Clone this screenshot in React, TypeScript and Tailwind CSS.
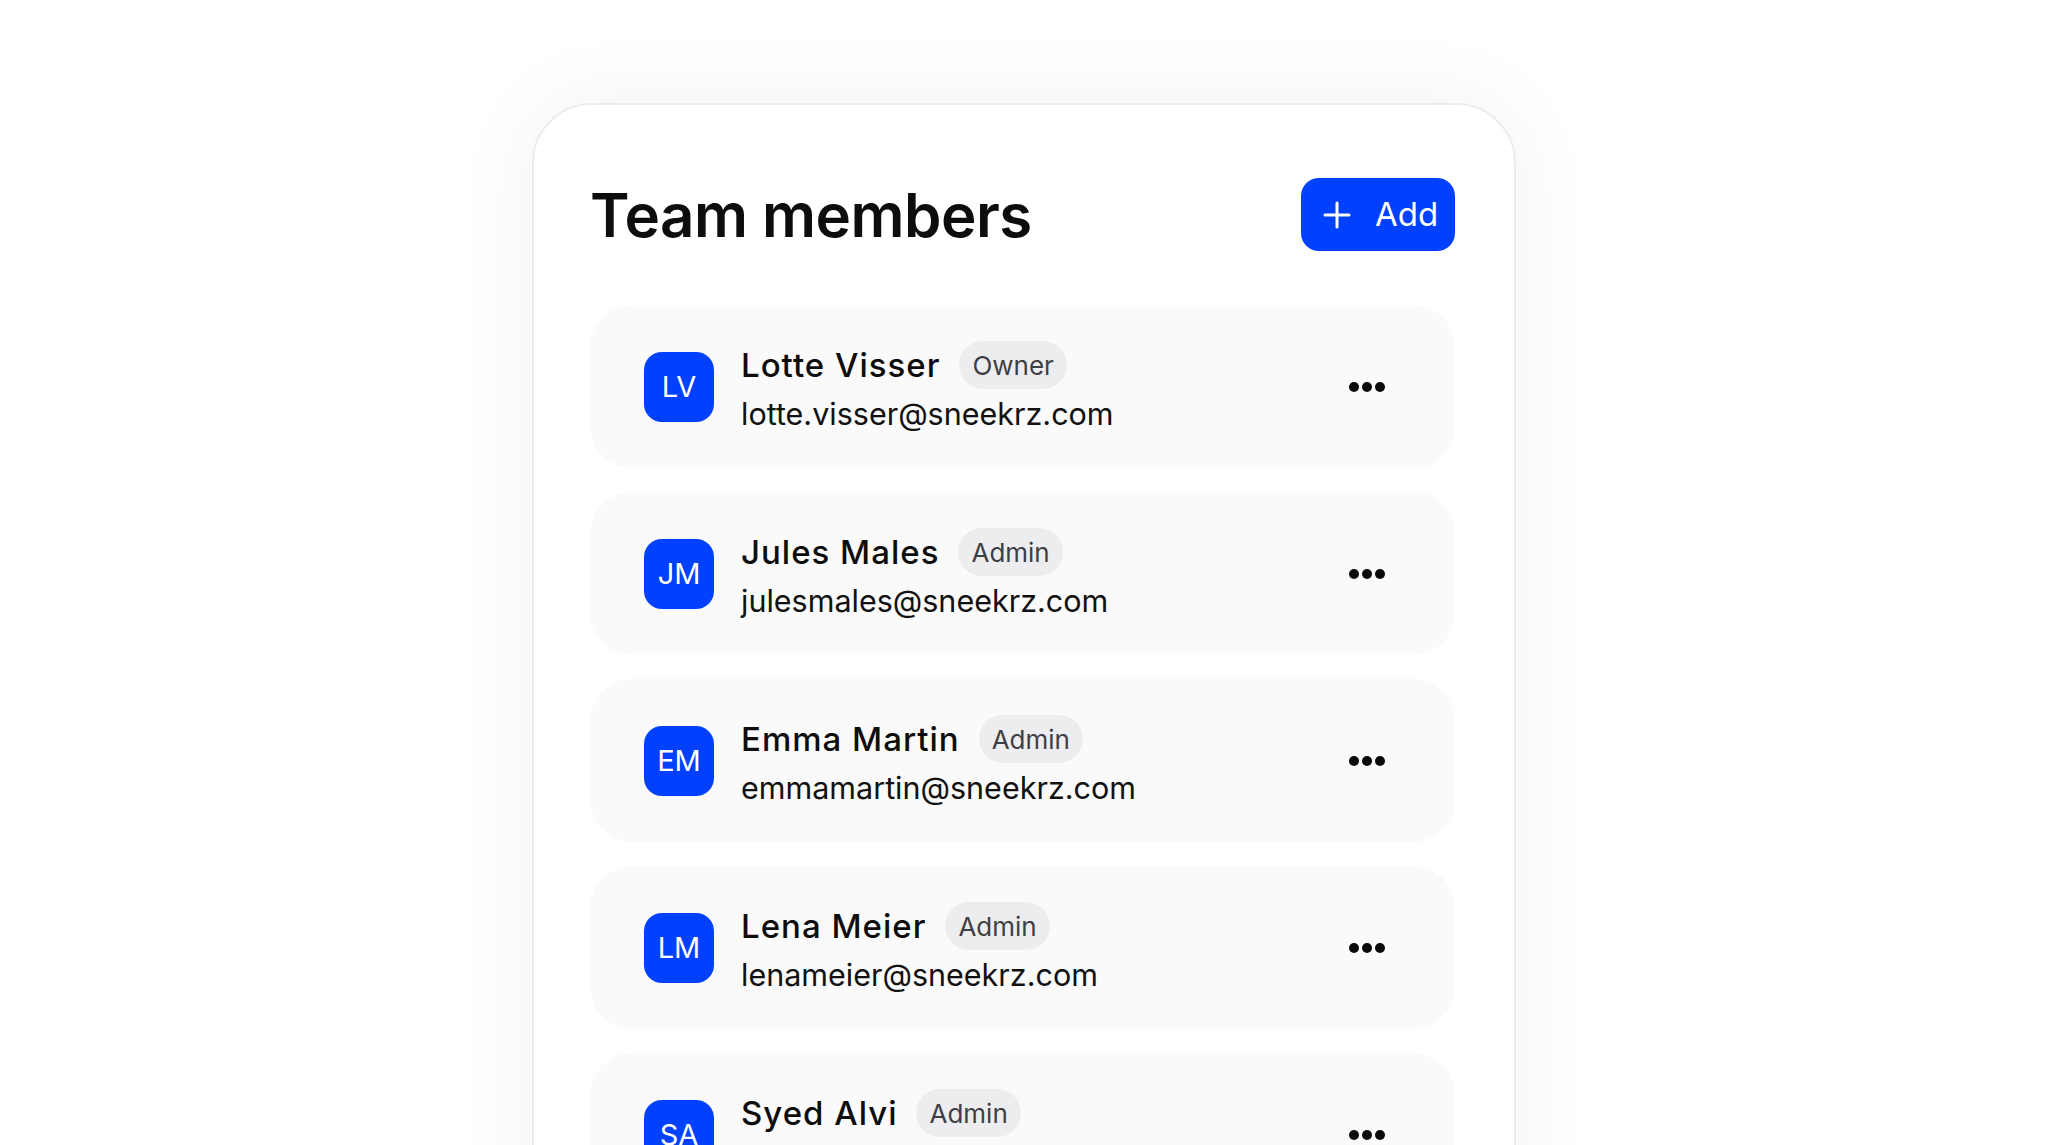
import React from "react";

const members = [
  { initials: "LV", name: "Lotte Visser", role: "Owner", email: "lotte.visser@sneekrz.com" },
  { initials: "JM", name: "Jules Males", role: "Admin", email: "julesmales@sneekrz.com" },
  { initials: "EM", name: "Emma Martin", role: "Admin", email: "emmamartin@sneekrz.com" },
  { initials: "LM", name: "Lena Meier", role: "Admin", email: "lenameier@sneekrz.com" },
  { initials: "SA", name: "Syed Alvi", role: "Admin", email: "syedalvi@sneekrz.com" },
];

function Dots() {
  return (
    <svg width="36" height="12" viewBox="0 0 36 12" aria-hidden="true">
      <circle cx="5" cy="6" r="5" fill="#0a0a0a" />
      <circle cx="18" cy="6" r="5" fill="#0a0a0a" />
      <circle cx="31" cy="6" r="5" fill="#0a0a0a" />
    </svg>
  );
}

export default function App() {
  return (
    <div
      className="w-full h-[1145px] overflow-hidden bg-white flex justify-center"
      style={{ fontFamily: "Inter, 'Noto Sans', sans-serif" }}
    >
      <div className="mt-[103px] w-[984px] shrink-0 self-start rounded-[60px] border-2 border-[#ededed] bg-white shadow-[0_0_90px_rgba(0,0,0,0.055)] pl-[56px] pr-[59px] pt-[73px] pb-[60px]">
        <div className="flex items-center justify-between">
          <h1 className="text-[60px] leading-[72px] font-semibold text-[#0d0d0d] tracking-[-0.5px]">
            Team members
          </h1>
          <button className="h-[73px] w-[154px] rounded-[18px] bg-[#0041ff] text-white flex items-center pl-[22px] gap-[24px]">
            <svg width="28" height="28" viewBox="0 0 28 28" aria-hidden="true">
              <path d="M14 2v24M2 14h24" stroke="white" strokeWidth="3" strokeLinecap="round" />
            </svg>
            <span className="text-[33px] leading-none font-normal">Add</span>
          </button>
        </div>
        <div className="mt-[54px] flex flex-col gap-[24px]">
          {members.map((m) => (
            <div
              key={m.initials}
              className="h-[163px] rounded-[42px] bg-[#fafafa] flex items-center pl-[54px] pr-[70px]"
            >
              <div className="w-[70px] h-[70px] rounded-[18px] bg-[#0041ff] text-white flex items-center justify-center text-[29px] font-normal shrink-0">
                {m.initials}
              </div>
              <div className="ml-[27px] pt-[2px] flex flex-col">
                <div className="flex items-center h-[48px]">
                  <span className="text-[33px] leading-[48px] font-medium tracking-[1px] text-[#0d0d0d]">{m.name}</span>
                  <span className="ml-[19px] h-[48px] px-[13px] rounded-full bg-[#ededef] text-[#3f3f46] text-[26px] flex items-center">
                    {m.role}
                  </span>
                </div>
                <span className="mt-[5px] text-[30.5px] leading-[40px] font-normal text-[#111111]">{m.email}</span>
              </div>
              <div className="ml-auto">
                <Dots />
              </div>
            </div>
          ))}
        </div>
      </div>
    </div>
  );
}
